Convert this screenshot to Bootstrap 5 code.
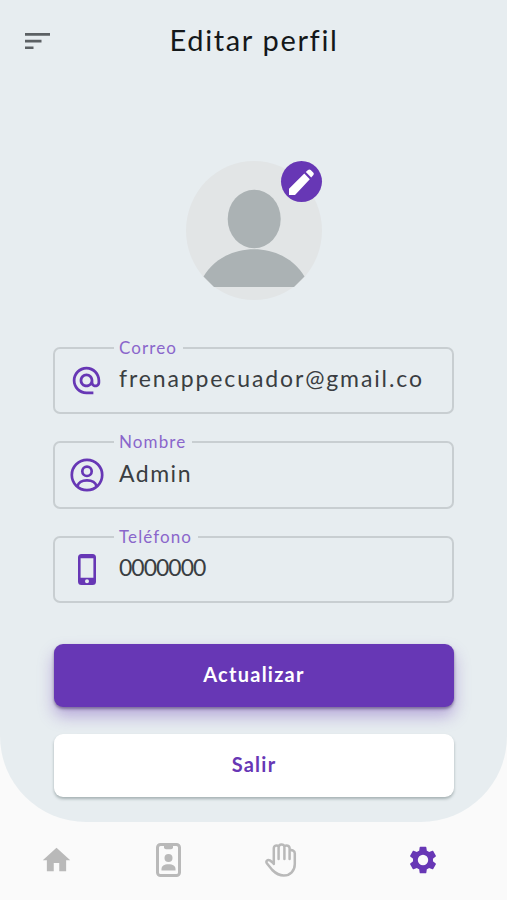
<!DOCTYPE html>
<html lang="es">
<head>
<meta charset="utf-8">
<meta name="viewport" content="width=device-width, initial-scale=1">
<title>Editar perfil</title>
<link href="https://cdn.jsdelivr.net/npm/bootstrap@5.3.0/dist/css/bootstrap.min.css" rel="stylesheet">
<style>
:root { --brand: #6737b5; --panel: #e7edf0; }
body { font-family: "Lato", "Liberation Sans", sans-serif; background: #fafafa; height: 900px; overflow: hidden; }
svg { display: block; flex: none; }
.panel { height: 822px; background: var(--panel); border-radius: 0 0 86px 86px; }
.topbar { height: 82px; padding: 0 25px; }
.topbar h1 { font-size: 29px; line-height: 1; letter-spacing: 1.65px; color: #14181a; padding: 0 0 4px 1px; }
.balance { width: 25px; }
.avatar { width: 136px; height: 139px; margin-top: 79px; }
.edit-btn { width: 41px; height: 41px; right: 0; top: 0; background: var(--brand); }
.fields { margin: 47px 53px 0; gap: 27px; }
.field-box { height: 67.4px; border: 2px solid #c8ced1; border-radius: 7px; }
.field-box label { left: 59px; top: -11px; padding: 0 6px 0 5px; font-size: 17px; line-height: 20px; color: #8a66cb; background: var(--panel); letter-spacing: 1.1px; }
.field-icon { width: 63px; height: 63px; }
.field-value { font-size: 23px; line-height: 30px; color: #3a3e42; margin-top: -5px; padding-left: 1px; letter-spacing: 1.5px; white-space: nowrap; }
.field-value.mail { letter-spacing: 1.88px; }
.field-value.digits { letter-spacing: -1px; }
.actions { margin: 41px 53px 0 54px; gap: 27px; }
.actions .btn { height: 63px; border: 0; border-radius: 9px; font-size: 20px; font-weight: 700; letter-spacing: 1.25px; padding: 0 0 4px; }
.btn-update, .btn-update:hover { background: var(--brand); color: #fff; box-shadow: 0 2px 3px rgba(60,40,90,.5), 0 9px 16px rgba(103,55,181,.38); }
.btn-exit, .btn-exit:hover { background: #fff; color: var(--brand); box-shadow: 0 2px 3px rgba(70,90,90,.4); }
.bottombar { height: 78px; padding-bottom: 3px; color: #b9b9b9; }
.tab { flex: 2 0 0; }
.tab-wide { flex: 3 0 0; color: var(--brand); padding-left: 2px; }
</style>
<script src="https://cdn.jsdelivr.net/npm/bootstrap@5.3.0/dist/js/bootstrap.bundle.min.js"></script>
</head>
<body>
<main class="panel d-flex flex-column">
  <header class="topbar d-flex align-items-center justify-content-between">
    <svg width="25" height="16" viewBox="0 0 25 16" fill="#5c6164"><path d="M0 0h25v2.8H0zM0 6.8h16.5v2.8H0zM0 13.4h8.5v2.8H0z"/></svg>
    <h1 class="m-0 fw-normal">Editar perfil</h1>
    <span class="balance"></span>
  </header>

  <div class="avatar position-relative mx-auto">
    <svg width="136" height="139" viewBox="0 0 136 139"><ellipse cx="68" cy="69.5" rx="68" ry="69.5" fill="#e2e5e6"/><g fill="#abb2b4"><ellipse cx="68.2" cy="58" rx="26.5" ry="29.3"/><path d="M17.500 115.500C28 98 47 88.300 68 88.300s40 9.700 50.500 27.200L108 126H28z"/></g></svg>
    <button type="button" class="edit-btn position-absolute rounded-circle border-0 p-0 d-flex align-items-center justify-content-center" aria-label="Editar">
      <svg width="41" height="41" viewBox="0 0 41 41" fill="#fff"><path d="M8 34v-6.200L23.300 12.600l5.500 5.700L14 34zM24.800 11.100l2.200-2c.9-.9 1.900-.9 2.700-.1l2.500 2.600c.9.900.8 1.800 0 2.700l-2 2.300z"/></svg>
    </button>
  </div>

  <form class="fields d-flex flex-column">
    <div class="field-box position-relative d-flex align-items-center">
      <label class="position-absolute">Correo</label>
      <span class="field-icon d-flex align-items-center justify-content-center">
        <svg width="33" height="33" viewBox="0 0 24 24" fill="#6737b5"><path d="M12 1.950c-5.520 0-10 4.480-10 10s4.480 10 10 10h5v-2h-5c-4.340 0-8-3.660-8-8s3.660-8 8-8 8 3.660 8 8v1.430c0 .79-.71 1.570-1.500 1.570s-1.500-.78-1.500-1.570v-1.430c0-2.760-2.240-5-5-5s-5 2.240-5 5 2.240 5 5 5c1.380 0 2.640-.56 3.540-1.470.65.89 1.770 1.470 2.960 1.470 1.970 0 3.500-1.600 3.500-3.570v-1.430c0-5.520-4.480-10-10-10zm0 13c-1.660 0-3-1.340-3-3s1.340-3 3-3 3 1.340 3 3-1.340 3-3 3z"/></svg>
      </span>
      <span class="field-value mail">frenappecuador@gmail.co</span>
    </div>
    <div class="field-box position-relative d-flex align-items-center">
      <label class="position-absolute">Nombre</label>
      <span class="field-icon d-flex align-items-center justify-content-center">
        <svg width="34" height="34" viewBox="0 0 34 34" fill="none" stroke="#6737b5" stroke-width="2.700"><circle cx="17" cy="17" r="15.200"/><circle cx="17" cy="13.300" r="4.700"/><path d="M7.500 28.500c.5-4 4.500-6.200 9.500-6.200s9 2.200 9.500 6.200"/></svg>
      </span>
      <span class="field-value">Admin</span>
    </div>
    <div class="field-box position-relative d-flex align-items-center">
      <label class="position-absolute">Teléfono</label>
      <span class="field-icon d-flex align-items-center justify-content-center">
        <svg width="18" height="31" viewBox="0 0 18 31" fill="#6737b5" fill-rule="evenodd"><path d="M3.500 0h11A3.500 3.500 0 0 1 18 3.500v24a3.500 3.500 0 0 1-3.500 3.500h-11A3.500 3.500 0 0 1 0 27.500v-24A3.500 3.500 0 0 1 3.500 0zM2.600 4.300v19.500h12.800V4.300zM9 25.200a2 2 0 1 0 0 4 2 2 0 0 0 0-4z"/></svg>
      </span>
      <span class="field-value digits">0000000</span>
    </div>
  </form>

  <div class="actions d-flex flex-column">
    <button type="button" class="btn btn-update">Actualizar</button>
    <button type="button" class="btn btn-exit">Salir</button>
  </div>
</main>

<nav class="bottombar d-flex align-items-center">
  <a class="tab d-flex justify-content-center text-reset" href="#" aria-label="Inicio">
    <svg width="33" height="33" viewBox="0 0 24 24" fill="currentColor"><path d="M10 20.500v-6h4v6h5v-8h3l-10-9-10 9h3v8z"/></svg>
  </a>
  <a class="tab d-flex justify-content-center text-reset" href="#" aria-label="Credencial">
    <svg width="25" height="34" viewBox="0 0 25 34"><rect x="1.500" y="1.500" width="22" height="31" rx="3" fill="none" stroke="currentColor" stroke-width="3"/><g fill="currentColor"><path d="M8 2h9v2.200a2 2 0 0 1-2 2h-5a2 2 0 0 1-2-2z"/><circle cx="12.500" cy="15" r="4"/><path d="M5.500 27.500v-1.200c0-3.300 2.500-5 7-5s7 1.700 7 5v1.200z"/></g></svg>
  </a>
  <a class="tab d-flex justify-content-center text-reset" href="#" aria-label="Mano">
    <svg width="32" height="34" viewBox="0 0 32 34" fill="none" stroke="currentColor" stroke-width="2.500" stroke-linecap="round" stroke-linejoin="round"><path d="M8.800 21V5.500C8.800 2.200 12 2 13.600 3.300M13.600 16V4.500c0-4 5.800-4 5.800-.5V16M19.400 3.200c2-1.200 5.200-.7 5.200 2.300V16M24.600 7.500c2.500-1 5.200.2 5.200 2.800V21c0 6.800-4.600 11.500-11 11.500-5 0-8.500-2.500-11.500-5.500L2 20.500c-1.600-2.200.6-4.400 2.800-3.200L8.800 20.500"/></svg>
  </a>
  <a class="tab-wide d-flex justify-content-center" href="#" aria-label="Ajustes">
    <svg width="32" height="32" viewBox="0 0 24 24" fill="currentColor"><path d="M19.430 12.980c.04-.32.070-.64.070-.98s-.03-.66-.07-.98l2.110-1.650c.19-.15.240-.42.120-.64l-2-3.460c-.12-.22-.39-.3-.61-.22l-2.490 1c-.52-.4-1.080-.73-1.690-.98l-.38-2.650A.488.488 0 0 0 14 2h-4c-.25 0-.46.180-.49.420l-.38 2.650c-.61.250-1.170.59-1.690.98l-2.490-1c-.23-.09-.49 0-.61.220l-2 3.460c-.13.220-.07.490.12.640l2.110 1.650c-.04.320-.07.650-.07.980s.03.660.070.980l-2.110 1.650c-.19.150-.24.420-.12.640l2 3.460c.12.220.39.300.61.220l2.490-1c.52.400 1.080.73 1.690.98l.38 2.650c.03.240.24.420.49.420h4c.25 0 .46-.18.490-.42l.38-2.650c.61-.25 1.170-.59 1.690-.98l2.490 1c.23.090.49 0 .61-.22l2-3.460c.12-.22.070-.49-.12-.64zM12 15.900a3.900 3.900 0 1 1 0-7.800 3.900 3.900 0 0 1 0 7.800z"/></svg>
  </a>
</nav>
</body>
</html>
